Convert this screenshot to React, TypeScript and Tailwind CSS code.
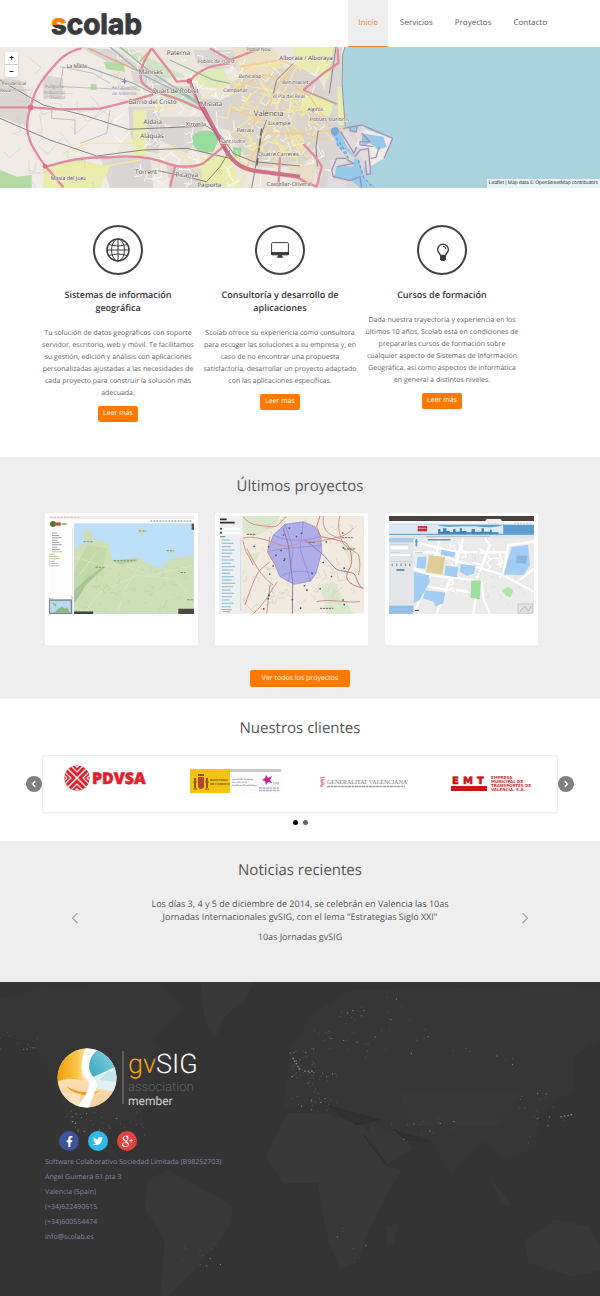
import React from "react";
import { FaFacebookF, FaTwitter } from "react-icons/fa";
import { TiSocialGooglePlus } from "react-icons/ti";

/* Deterministic noise so that generated streets stay the same on every render. */
function noise(seed: number) {
  let s = seed;
  return () => {
    s = (s * 16807) % 2147483647;
    return s / 2147483647;
  };
}

type Box = [number, number, number, number];

function scatter(seed: number, count: number, [x, y, w, h]: Box) {
  const next = noise(seed * 7919);
  return Array.from({ length: count }, () => [x + next() * w, y + next() * h]);
}

function streets(seed: number, count: number, box: Box, size: number) {
  const next = noise(seed + 77);
  return scatter(seed, count, box)
    .map(([x, y]) => {
      const a = next() * 3.14;
      const l = size * (0.4 + next());
      return `M${x.toFixed(0)} ${y.toFixed(0)}l${(Math.cos(a) * l).toFixed(0)} ${(Math.sin(a) * l).toFixed(0)}l${(-Math.sin(a) * l * 0.6).toFixed(0)} ${(Math.cos(a) * l * 0.6).toFixed(0)}`;
    })
    .join("");
}

const MOTORWAYS = [
  "M245 145C190 155 165 195 135 230C105 270 100 290 92 322C75 370 80 400 95 435C110 460 120 480 138 500L190 562",
  "M0 322L92 322L180 328L300 326L385 305L460 283",
  "M455 145C430 185 415 215 425 245C440 270 480 280 520 293C560 305 580 320 610 330",
  "M455 145L510 215L530 245L570 242",
  "M690 190C640 195 600 205 570 242C575 285 600 310 615 345C640 385 655 420 680 455C705 490 730 500 750 508L900 530",
  "M140 500C200 480 260 470 330 472C400 465 450 470 500 490C540 505 590 500 610 490L670 440",
  "M840 470L835 560M630 145L690 180L780 145M510 562L525 500",
  "M910 270L970 220L1015 190L1013 145M910 432L950 475L965 500L950 560L920 548L890 530",
];

const PLACES: [number, number, number, string][] = [
  [535, 164, 19, "Paterna"],
  [230, 204, 16, "La Malla"],
  [452, 222, 19, "Manises"],
  [526, 279, 19, "Quart de Poblet"],
  [458, 312, 19, "Barrio del Cristo"],
  [634, 318, 19, "Mislata"],
  [458, 373, 19, "Aldaia"],
  [456, 414, 19, "Alaquàs"],
  [588, 378, 17, "Xirivella"],
  [806, 348, 23, "València"],
  [838, 375, 16, "Eixample"],
  [736, 397, 16, "Patraix"],
  [698, 430, 15, "Sant Isidre"],
  [835, 469, 16, "Quatre Carreres"],
  [438, 523, 19, "Torrent"],
  [560, 531, 19, "Picanya"],
  [628, 562, 18, "Paiporta"],
  [205, 539, 16, "Masia del Juez"],
  [868, 559, 17, "Castellar-Oliveral"],
  [648, 189, 15, "Pobles de l'Oest"],
  [775, 153, 15, "Poble Nou"],
  [750, 233, 15, "Benicalap"],
  [706, 275, 15, "Campanar"],
  [918, 180, 18, "Alboraia / Alboraya"],
  [886, 252, 15, "Benimaclet"],
  [866, 294, 15, "el Pla del Real"],
  [946, 332, 15, "Algirós"],
  [988, 362, 15, "Poblats Marítims"],
  [42, 255, 14, "Residencial"],
  [16, 275, 14, "Reva"],
];

function CityMap() {
  return (
    <svg className="block h-[141px] w-full" viewBox="0 141 1800 423" preserveAspectRatio="xMidYMid slice" role="img" aria-label="Mapa de València">
      <rect x="0" y="141" width="1800" height="423" fill="#f0ebe6" />
      <path d="M360 141H1040V564H520L350 470L400 320L330 230Z" fill="#ece6dc" />
      <g fill="#d9d6d3">
        <path d="M0 235L60 240L90 300L85 380L0 350ZM130 225L190 235L185 300L130 290ZM240 141L350 150L420 200L330 190ZM390 200L470 195L500 240L450 265L400 245ZM450 255L590 260L610 300L520 310ZM385 320L480 320L475 460L410 450L390 400ZM480 350L620 350L600 410L560 460L480 420ZM300 470L450 470L460 564H330ZM500 495L610 505L600 564H510ZM580 150L700 150L720 200L640 210L590 190ZM600 300L700 290L720 400L650 380Z" />
        <path d="M690 250L760 210L900 200L960 240L1000 330L1000 420L900 500L760 500L690 410Z" fill="#dcd5ce" />
        <path d="M990 141H1025L1022 250L1035 380L1090 378L1065 440L1110 450L1120 564H960L940 470L960 390Z" />
      </g>
      <g fill="#e8edae">
        <path d="M130 500L240 480L330 500L300 564H130ZM600 470L690 470L720 564H610ZM880 141H1000L985 240L950 220L900 200ZM400 330H440V470H400ZM910 280L1000 310L990 350L900 330Z" />
        <path d="M700 141H820L850 200L780 235L710 210ZM860 490L950 490L940 560L880 540Z" fill="#eadfc4" />
        <path d="M1012 260H1022L1035 375H1015Z" />
      </g>
      <g fill="#b4dba4">
        <path d="M310 185L370 190L375 215L320 208ZM272 252H290V270H272ZM0 510L50 530L95 525L95 564H0Z" />
        <path d="M575 415C590 385 640 385 660 410L640 455C600 465 580 450 575 415Z" fill="#98db9d" />
        <path d="M700 440L725 445L720 480L698 470Z" fill="#98db9d" />
        <path d="M570 215L670 205L690 245L650 265L600 255Z" fill="#dfe9b9" />
        <path d="M470 270L560 285L600 325L570 320L500 295ZM350 141L400 150L560 230L500 235Z" fill="#cfe3c6" />
      </g>
      <path d="M1035 141L1028 165L1026 250L1032 330L1040 385L1085 375L1102 390L1178 415L1152 475L1110 500L1105 525L1090 495L1100 564H1800V141Z" fill="#aad3df" />
      <g fill="#97c9e8">
        <path d="M990 388L1012 380L1035 405L1050 450L1065 470L1060 500L1010 495L1000 530L1060 545L1080 564H1105L1075 480L1035 450L1015 440Z" />
        <path d="M1050 380H1072L1068 396L1050 390ZM1085 400L1150 410L1160 440L1135 450L1110 430L1085 440Z" />
      </g>
      <path d="M1020 390L1045 392L1070 435L1062 462L1040 440ZM1070 450L1105 445L1110 500L1105 525L1095 490L1080 470ZM1066 400L1095 382L1080 430ZM990 480L1040 480L1030 495L1010 500L1000 535L1040 545L1035 564H980Z" fill="#e2dcde" />
      <g fill="none" stroke="#ffffff" strokeWidth="3" opacity=".8">
        <path d={streets(5, 110, [360, 150, 620, 400], 34)} />
        <path d={streets(9, 26, [0, 150, 380, 400], 60)} stroke="#cfcac6" strokeWidth="2" />
      </g>
      <g fill="none" stroke="#f5e79c" strokeWidth="4">
        <path d={streets(21, 60, [690, 180, 290, 310], 36)} />
        <path d="M200 460L260 430L400 430L430 330L520 320M200 460L210 490M130 520L250 510L420 480M600 300L700 240L760 200L850 190M690 400L760 350L900 330L1000 310M720 560L780 430L840 300L910 160M700 250L860 280L1000 420M760 210L820 300L900 460M500 430L560 470L620 564" />
      </g>
      <g fill="none" stroke="#f6cc8f" strokeWidth="5">
        <path d="M700 270L790 225L850 235L930 290L990 380M680 440L740 390L800 330L830 260L880 200M740 500L800 400L900 400L980 420M690 330L770 350L850 340M720 200L840 180L890 200M960 395L1000 390L1035 385" />
        <path d="M265 145L330 175L420 215M455 145L420 185" stroke="#ddb08c" />
        <path d="M910 270L1010 312" stroke="#c79c83" />
      </g>
      <g fill="none" stroke="#9fb7b0" strokeWidth="4">
        <path d="M330 141L430 225L560 290L620 330M360 141L450 215L600 310M230 190L400 250L460 280M510 180L640 240L690 250" />
      </g>
      <g fill="none" stroke="#77736f" strokeWidth="2.5">
        <path d="M0 240L60 275L130 315L250 345L385 388L620 378L665 410L700 460L760 485L900 498M0 355L150 420L290 468L430 450L560 445L690 475M1008 141L998 210L988 280M755 564L785 400L800 360M475 512L620 545L660 500L690 450M955 390L948 440L952 500M820 280L830 240L880 190" />
        <path d="M155 328V355L225 360V405M330 330L320 400L240 430M0 270H90M190 200L180 260L420 270M180 200L280 220L330 250" stroke="#bdb6b2" />
      </g>
      <path d="M785 385L770 500" stroke="#6f6b69" strokeWidth="5" strokeDasharray="22 8" />
      <g fill="none" stroke="#e38b9b" strokeWidth="7" strokeLinejoin="round">
        {MOTORWAYS.map((d) => (
          <path key={d} d={d} />
        ))}
      </g>
      <path d="M600 305C620 345 650 400 680 455C705 495 730 505 760 512L900 530" fill="none" stroke="#cf7188" strokeWidth="12" />
      <path d="M570 235L600 320M600 320L680 455" stroke="#a8607c" strokeWidth="3" />
      <g fill="#dc6f86">
        <rect x="84" y="314" width="16" height="16" rx="6" />
        <circle cx="568" cy="243" r="8" />
        <circle cx="670" cy="430" r="9" />
        <circle cx="135" cy="499" r="7" />
      </g>
      <g fill="none" stroke="#a094b8" strokeWidth="4">
        <path d="M1030 385L1085 375L1178 415L1152 475M1050 380V392L1068 396L1072 380M1085 400L1110 425H1080V435L1120 440M1138 440L1128 472L1112 475M1022 395L1062 460L1070 440M1065 470L1080 450L1105 445L1112 522L1100 524L1096 482M1040 475H1010L995 510L1000 530L1050 542L1080 530L1085 564M1040 478L1060 490L1010 500" />
        <path d="M1075 480L1090 530L1120 564M1010 430L1050 480M1000 400L1040 460" stroke="#6f9fe6" strokeDasharray="10 6" />
      </g>
      <circle cx="1005" cy="394" r="12" fill="#7fa6dd" />
      <path d="M1035 141L1028 165L1026 250L1032 330L1036 380" fill="none" stroke="#8f96a0" strokeWidth="3" />
      <g fill="#8f8bc0" fontFamily="Open Sans, Noto Sans, sans-serif" fontSize="14" textAnchor="middle">
        <path d="M373 232L376 242L384 246L376 247L374 254L371 247L363 246L371 242Z" />
        <text x="373" y="268">Aeropuerto</text>
        <text x="373" y="284">de Valencia</text>
        <text x="163" y="264" fill="#9c94a8">Polígono</text>
        <text x="163" y="281" fill="#9c94a8">Industrial</text>
        <text x="163" y="298" fill="#9c94a8">el Oliveral</text>
      </g>
      <g fill="#4b4948" stroke="#f4efe9" strokeWidth="3" paintOrder="stroke" strokeLinejoin="round" fontFamily="Open Sans, Noto Sans, sans-serif" textAnchor="middle">
        {PLACES.map(([x, y, size, name]) => (
          <text key={name} x={x} y={y} fontSize={size}>
            {name}
          </text>
        ))}
      </g>
    </svg>
  );
}

function CoastThumb() {
  return (
    <svg className="block h-auto w-full" viewBox="27 153 433 293" role="img" aria-label="Visor de costa">
      <rect x="27" y="153" width="433" height="293" fill="#fdfdfd" />
      <rect x="27" y="153" width="433" height="9" fill="#f0eeee" />
      <path d="M32 157H120" stroke="#d7b1ac" strokeWidth="3" strokeDasharray="6 4" />
      <path d="M330 168H455" stroke="#8fb39a" strokeWidth="4" strokeDasharray="5 4" />
      <circle cx="39" cy="177" r="9" fill="#5f7338" />
      <path d="M48 177H62" stroke="#c8502e" strokeWidth="10" />
      <path d="M64 177H80" stroke="#9fbd77" strokeWidth="6" />
      {Array.from({ length: 15 }, (_, i) => (
        <rect key={i} x={i < 9 ? 36 : 27} y={203 + i * 7} width={14 + ((i * 7) % 20)} height="2" fill={i < 8 ? "#777777" : "#a3a96c"} />
      ))}
      <rect x="97" y="190" width="2" height="256" fill="#d8d8d8" />
      <rect x="102" y="175" width="358" height="271" fill="#bddff8" />
      <path d="M102 250L120 240L142 232L128 220L133 198L145 192L160 215L150 230L185 225L208 240L214 280L250 287L290 277L330 300L365 310L390 280L420 278L460 270V446H102Z" fill="#cddfb6" />
      <path d="M102 320L140 240L200 250L190 300L102 400Z" fill="#c2d9a9" />
      <path d="M102 375L140 340L180 310L195 305L140 355L102 415Z" fill="#a5c693" />
      <path d="M214 285L285 280L292 286L240 298Z" fill="#b3cd9b" />
      <path d="M292 196L305 190L318 200L304 208ZM376 256L392 250L400 262L385 265Z" fill="#c7dcb6" />
      <path d="M105 275L180 300L250 300L330 330L460 300M130 446L180 380L290 330L400 340L460 400M230 446L260 360L300 300M110 340L170 260" fill="none" stroke="#e0e8c2" strokeWidth="2" />
      <path d={streets(14, 60, [105, 300, 340, 130], 12)} fill="none" stroke="#bfd2a4" strokeWidth="2" />
      <path d="M166 306H192M220 287H285M130 230H160M420 322H434M440 403H460M295 198H318M378 257H400" stroke="#7a9673" strokeWidth="3" strokeDasharray="7 3" />
      <rect x="453" y="176" width="7" height="18" fill="#555555" />
      <rect x="102" y="438" width="57" height="8" fill="#444444" />
      <rect x="413" y="430" width="47" height="16" fill="#4a4a40" />
      <path d="M27 400H37" stroke="#d2b96c" strokeWidth="3" />
      <rect x="28" y="404" width="66" height="40" fill="#b9d9f2" stroke="#76828c" strokeWidth="4" />
      <path d="M34 410L50 418L46 424ZM42 442L55 430L66 424L76 430L82 425L88 442Z" fill="#8abb76" />
    </svg>
  );
}

function ProvinceThumb() {
  return (
    <svg className="block h-auto w-full" viewBox="537 153 435 293" role="img" aria-label="Visor provincial">
      <rect x="537" y="153" width="435" height="293" fill="#f1eadf" />
      <path d="M608 153H720L700 190L640 215L608 200ZM620 270L660 260L650 290ZM840 360L880 350L940 446H860ZM900 230L950 250L930 290Z" fill="#dce6cb" />
      <path d={streets(31, 46, [612, 160, 340, 260], 20)} fill="none" stroke="#dccfbd" strokeWidth="2" />
      <path d={streets(38, 24, [612, 300, 340, 120], 14)} fill="none" stroke="#b9dada" strokeWidth="2" />
      <path d="M683 260L700 210L735 178L790 170L825 185L842 215L845 262L828 325L812 348L762 358L720 335L705 300Z" fill="#a9a8ea" stroke="#7a7ad8" strokeWidth="2" opacity=".9" />
      <path d="M683 260C720 250 760 250 845 240M700 210C740 230 790 230 842 215M735 178L760 250L745 350M790 170L780 250L812 348M720 335C760 310 800 320 828 325" fill="none" stroke="#8d84cf" strokeWidth="2" />
      <g fill="none" stroke="#cf938b" strokeWidth="3" strokeLinejoin="round">
        <path d="M610 155C630 185 660 180 690 185S720 165 740 155M608 220C640 210 680 225 720 240S780 225 800 230S880 220 900 215S930 200 940 190M620 250C640 290 650 305 656 315S690 355 700 360M615 420C625 390 640 350 650 330S680 300 690 290M608 225L616 255L640 300M690 360L680 446M712 350C690 380 680 410 640 446M850 153C845 200 870 210 900 220M830 410C870 400 920 415 960 410" />
        <path d="M900 153C890 180 900 220 910 235S950 260 955 270S962 310 955 330M690 215L683 262L700 290" />
      </g>
      <g fill="none" stroke="#8580a0" strokeWidth="3">
        <path d="M730 190L745 240L752 300L758 350L757 446M795 225L845 265C870 290 880 310 895 315S940 320 945 330S955 365 970 370" />
        <path d="M840 153L830 185L842 215C870 220 890 225 910 230S935 270 935 290S920 315 920 335S950 365 970 370" stroke="#d07c70" />
      </g>
      <g fill="#4d4c73">
        {scatter(12, 30, [615, 160, 300, 270]).map(([x, y]) => (
          <rect key={x} x={x} y={y} width="5" height="5" rx="2" />
        ))}
      </g>
      <path d="M620 208H648M808 232H826M905 218H938M912 252H944M840 430H880" stroke="#686868" strokeWidth="3" strokeDasharray="7 2" />
      <rect x="537" y="153" width="70" height="293" fill="#eef0f1" />
      <path d="M540 163H560M540 173H584" stroke="#2f2f2f" strokeWidth="5" />
      <circle cx="543" cy="191" r="3" fill="#333333" />
      <circle cx="543" cy="203" r="3" fill="#333333" />
      <path d="M552 191H600M552 203H600" stroke="#ffffff" strokeWidth="6" />
      <path d="M540 215H556" stroke="#777777" strokeWidth="3" />
      {Array.from({ length: 21 }, (_, i) => (
        <rect key={i} x={545} y={223 + i * 10} width={24 + ((i * 11) % 18)} height="4" fill="#9cc9da" />
      ))}
      <rect x="600" y="218" width="4" height="220" fill="#d3dfe4" />
      <path d="M545 434H575M550 440H570" stroke="#8b8b8b" strokeWidth="2" />
    </svg>
  );
}

function StreetThumb() {
  return (
    <svg className="block h-auto w-full" viewBox="298 153 434 293" role="img" aria-label="Visor callejero">
      <rect x="298" y="153" width="434" height="293" fill="#ebebeb" />
      <rect x="298" y="153" width="434" height="16" fill="#4a423f" />
      <path d="M586 169L590 162H632L636 169Z" fill="#ececec" />
      <rect x="298" y="168" width="434" height="11" fill="#f4f4f4" />
      <path d="M595 175H620M672 175H725" stroke="#c9c9c9" strokeWidth="3" strokeDasharray="6 3" />
      <rect x="298" y="179" width="434" height="31" fill="#5b9fd2" />
      <path d="M298 179H440C470 190 500 182 560 184C600 190 630 184 640 180V210H298Z" fill="#dbeaf5" />
      <path d="M445 210V192H452V200H460V190H470V198H480V202H490V192H497V200H510V190H516V198H530V202H545V192H555V200H575V190H582V200H600V194H606V202H626V210Z" fill="#3f80b4" />
      <path d="M298 208H732" stroke="#72a9d2" strokeWidth="4" />
      <rect x="384" y="183" width="28" height="16" fill="#c9303e" />
      <path d="M386 190H410" stroke="#f0c4c8" strokeWidth="2" />
      <rect x="298" y="212" width="434" height="8" fill="#e0e4e6" />
      <path d="M410 214H600" stroke="#9aaab5" strokeWidth="2" />
      <g stroke="#ffffff" strokeWidth="7" fill="none">
        <path d="M372 262L430 262L510 290L640 330L732 380M372 310L420 330L560 345L600 240L585 220M450 220L440 262L420 330L372 446M520 220L500 290L470 370L440 446M640 330L655 240L732 230M480 370L560 385L550 446M395 360L500 380M690 345L732 310M372 230L500 262L650 262M600 446L580 400L575 345" />
        <path d={streets(44, 20, [480, 225, 160, 110], 24)} strokeWidth="4" />
      </g>
      <path d={streets(41, 30, [480, 235, 220, 180], 15)} fill="none" stroke="#dcdcdc" strokeWidth="2" />
      <g fill="#a3cdf2">
        <path d="M384 276L410 274L407 311L380 308ZM455 253L497 262L493 277L453 270ZM467 302L505 306L501 337L464 330ZM512 297L558 302L552 325L532 332L510 320ZM372 320L418 330L420 350L390 405L372 415ZM406 375L467 382L460 415L436 423L432 410L400 400ZM665 246L714 240L720 300L700 330L641 328Z" />
      </g>
      <path d="M680 272L712 272L708 296L678 294Z" fill="#87b8e2" />
      <path d="M418 270L466 276L458 328L410 322Z" fill="#e0cd95" />
      <path d="M544 346L573 346L570 402L542 398Z" fill="#9fdf9c" />
      <path d="M636 376L655 365L670 376L662 396L648 392Z" fill="#aae7a2" />
      <rect x="298" y="219" width="73" height="202" fill="#e3e5e9" />
      <rect x="298" y="219" width="73" height="13" fill="#a8ccec" />
      <path d="M302 248H355M302 272H362" stroke="#ffffff" strokeWidth="9" />
      <path d="M302 238H355M302 262H330M302 275H368M302 289H368" stroke="#c5c7ca" strokeWidth="2" />
      <path d="M306 299H366" stroke="#8d949a" strokeWidth="8" strokeDasharray="4 9" />
      <rect x="320" y="312" width="24" height="5" fill="#5c84a8" />
      <rect x="298" y="421" width="73" height="25" fill="#93c0e8" />
      <path d="M376 230H384M380 222V244M414 224H482" stroke="#4fa6b4" strokeWidth="5" />
      <path d="M376 263H400" stroke="#68c768" strokeWidth="2" />
      <path d="M684 416H728V444H684Z" fill="#e1e1e1" stroke="#bcbcbc" strokeWidth="2" />
      <path d="M690 438L705 424L716 438L724 422" stroke="#a9a9a9" strokeWidth="2" fill="none" />
      <path d="M376 436H388" stroke="#555555" strokeWidth="3" />
    </svg>
  );
}

function ScolabLogo() {
  return (
    <svg className="block h-[40px] w-[104px]" viewBox="0 0 104 40" role="img" aria-label="scolab">
      <defs>
        <linearGradient id="mark" gradientUnits="userSpaceOnUse" x1="0" y1="12" x2="0" y2="31">
          <stop offset=".5" stopColor="#f97d0b" />
          <stop offset=".5" stopColor="#3a3a3c" />
        </linearGradient>
      </defs>
      <text x="4" y="30" fill="#3a3a3c" stroke="#3a3a3c" fontFamily="Inter, sans-serif" fontSize="28" fontWeight="700" strokeWidth="1" strokeLinejoin="round">
        <tspan fill="url(#mark)" stroke="url(#mark)">s</tspan>colab
      </text>
    </svg>
  );
}

function GlobeIcon() {
  return (
    <svg className="size-6" viewBox="0 0 24 24" fill="none" stroke="#3d3d3d" strokeWidth="1">
      <circle cx="12" cy="12" r="11" strokeWidth="1.6" />
      <ellipse cx="12" cy="12" rx="6.5" ry="11" />
      <path d="M12 1V23M1 12H23M3 6.5C8 8.4 16 8.4 21 6.5M3 17.5C8 15.6 16 15.6 21 17.5" />
    </svg>
  );
}

function ScreenIcon() {
  return (
    <svg className="size-6" viewBox="0 0 24 24">
      <rect x="3.6" y="4.6" width="16.8" height="12" rx="1" fill="#ffffff" stroke="#3d3d3d" strokeWidth="1" />
      <path d="M3 14H21V16.4Q21 17.2 20 17.2H4Q3 17.2 3 16.4ZM10 17H14V18.6H15V19.8H9V18.6H10Z" fill="#3d3d3d" />
    </svg>
  );
}

function BulbIcon() {
  return (
    <svg className="size-6" viewBox="0 0 24 24" fill="none" stroke="#3d3d3d">
      <g transform="translate(1 2)">
        <path d="M9.6 16C9.6 13.6 6.6 12.6 6.6 9.4A5.4 5.2 0 0 1 17.4 9.4C17.4 12.6 14.4 13.6 14.4 16Z" strokeWidth="1.4" />
        <path d="M12 6.4C13.6 6.4 14.8 7.6 14.9 9" strokeWidth="1" />
        <path d="M9 14.8H15V19.2L13.4 21H10.6L9 19.2Z" fill="#3d3d3d" stroke="none" />
      </g>
    </svg>
  );
}

function PdvsaLogo() {
  return (
    <svg className="block h-[28px] w-[86px]" viewBox="0 0 86 28" role="img" aria-label="PDVSA">
      <defs>
        <clipPath id="disc">
          <circle cx="13" cy="14" r="12.6" />
        </clipPath>
      </defs>
      <circle cx="13" cy="14" r="12.6" fill="#e2202c" />
      <g clipPath="url(#disc)" fill="none" stroke="#ffffff" strokeWidth="1.1">
        <g transform="translate(0 1)">
          <path d="M0 0L26 26M26 0L0 26" strokeWidth="1.4" />
          <path d="M4 -2L13 7L22 -2M7 -4L13 2.5L19 -4M4 28L13 19L22 28M7 30L13 23.5L19 30M-2 4L7 13L-2 22M-2 8L3 13L-2 18M28 4L19 13L28 22M28 8L23 13L28 18" />
        </g>
      </g>
      <text x="28" y="20" fill="#e2202c" stroke="#e2202c" strokeWidth=".5" fontFamily="Noto Sans, sans-serif" fontWeight="900" fontSize="16">PDVSA</text>
    </svg>
  );
}

function MinisterioLogo() {
  return (
    <svg className="block h-[26px] w-[92px]" viewBox="0 0 92 26" role="img" aria-label="Ministerio de Fomento">
      <rect x="0" y="0" width="91" height="24" fill="#fbfbfc" />
      <rect x="40" y="0" width="51" height="3" fill="#c9c9cd" />
      <rect x="0" y="0" width="40" height="24" fill="#f2c311" />
      <path d="M8 8H14V18Q11 22 8 18Z" fill="#b2452a" />
      <path d="M4 9H6V19H4ZM16 9H18V19H16ZM8 5H14V7H8Z" fill="#8b5a1e" />
      <path d="M3 13H7M15 13H19M3 20H7M15 20H19" stroke="#8b5a1e" />
      <g fontFamily="Liberation Sans, sans-serif" fontSize="3" fontWeight="700">
        <text x="20" y="12" fill="#6d5a12">MINISTERIO</text>
        <text x="20" y="16" fill="#6d5a12">DE FOMENTO</text>
        <g fill="#70707c" fontSize="2">
          <text x="42" y="11">DIRECCIÓN GENERAL</text>
          <text x="42" y="14">DEL INSTITUTO</text>
          <text x="42" y="17">GEOGRÁFICO NACIONAL</text>
        </g>
        <text x="83" y="15" fill="#b085ad">cnig</text>
      </g>
      <path d="M76 6L78 9L82 7L80 11L82 14L78 13L76 16L75 12L72 11L75 9Z" fill="#c6249b" />
      <path d="M69 19H89M69 21.5H90" stroke="#b9b1cf" strokeWidth="1.4" strokeDasharray="3 .5" />
    </svg>
  );
}

function GeneralitatLogo() {
  return (
    <svg className="block h-[14px] w-[94px]" viewBox="0 0 94 14" role="img" aria-label="Generalitat Valenciana">
      <path d="M3 2L8 1M3 5L8 3.5M4 7H8M3 10L7 8.5M5 1V11" stroke="#d97a92" strokeWidth="1.2" />
      <text x="10" y="8" fill="#77777c" fontFamily="Liberation Serif, serif" fontSize="6">GENERALITAT VALENCIANA</text>
      <path d="M10 10.5H88" stroke="#a5a5aa" strokeWidth="1.4" strokeDasharray="3 .5" />
    </svg>
  );
}

function EmtLogo() {
  return (
    <svg className="block h-[20px] w-[83px]" viewBox="0 -2 83 20" role="img" aria-label="EMT">
      <text y="8" fill="#cd1414" stroke="#cd1414" strokeWidth=".6" fontFamily="DejaVu Sans, sans-serif" fontWeight="700" fontSize="10">
        <tspan x="1">E</tspan>
        <tspan x="12">M</tspan>
        <tspan x="26">T</tspan>
      </text>
      <rect x="0" y="10" width="36" height="5" fill="#cd1414" />
      <g fill="#cd3434" fontFamily="DejaVu Sans, sans-serif" fontWeight="700" fontSize="4">
        <text x="40" y="3">EMPRESA</text>
        <text x="40" y="7">MUNICIPAL DE</text>
        <text x="40" y="11">TRANSPORTES DE</text>
        <text x="40" y="15">VALENCIA, S.A.</text>
      </g>
    </svg>
  );
}

function GvsigLogo() {
  return (
    <svg className="block h-[62px] w-[150px]" viewBox="0 0 150 62" role="img" aria-label="gvSIG association member">
      <defs>
        <clipPath id="ball">
          <circle cx="30" cy="30" r="29.5" />
        </clipPath>
        <linearGradient id="sun" x1="0" y1="0" x2="1" y2="0">
          <stop offset="0" stopColor="#ed9e0c" />
          <stop offset=".6" stopColor="#f8c341" />
          <stop offset="1" stopColor="#fceab9" />
        </linearGradient>
        <linearGradient id="sea" x1="1" y1="0" x2="0" y2="1">
          <stop offset="0" stopColor="#8fd6e0" />
          <stop offset="1" stopColor="#35a6c0" />
        </linearGradient>
        <linearGradient id="sand" x1="0" y1="0" x2="0" y2="1">
          <stop offset="0" stopColor="#fdf0cf" />
          <stop offset="1" stopColor="#f9cd9a" />
        </linearGradient>
      </defs>
      <g clipPath="url(#ball)">
        <rect x="0" y="0" width="60" height="60" fill="url(#sand)" />
        <path d="M0 0H32C24 10 22 22 26 33C18 30 8 30 0 34Z" fill="url(#sun)" />
        <path d="M40 0H60V20L34 30C28 20 33 8 40 0Z" fill="url(#sea)" />
        <path d="M34 30L60 18V44L38 40Z" fill="#e2f2f4" />
        <path d="M42 32L50 24L60 22V34Z" fill="#c2e5ec" />
        <path d="M9 38C17 43 30 46 43 43C33 50 18 48 9 38Z" fill="#eea327" />
        <path d="M24 46L4 44L14 56L22 60Z" fill="#f8e2be" />
        <path d="M29 0C22 14 24 26 31 33C34 38 30 46 20 60H32C35 50 38 44 40 38C41 32 32 27 32 19C32 10 37 3 44 0Z" fill="#ffffff" />
      </g>
      <path d="M66 3V56" stroke="#858585" strokeWidth="1" />
      <g fontFamily="Roboto, sans-serif">
        <text x="71" y="25" fontSize="27" fontWeight="300" fill="#ffffff">
          <tspan fill="#f6a50c">gv</tspan>SIG
        </text>
        <text x="71" y="43" fontSize="13" fontWeight="300" fill="#626262">association</text>
        <text x="71" y="57" fontSize="12" fontWeight="400" fill="#d2d2d2">member</text>
      </g>
    </svg>
  );
}

const LIGHTS: [number, number, Box][] = [
  [101, 34, [755, 205, 70, 90]],
  [102, 30, [790, 270, 90, 100]],
  [103, 26, [810, 90, 140, 120]],
  [104, 20, [940, 50, 180, 190]],
  [105, 20, [1350, 340, 150, 150]],
  [106, 18, [1020, 400, 180, 80]],
  [107, 40, [170, 390, 210, 80]],
  [108, 12, [0, 150, 100, 60]],
  [109, 12, [450, 780, 130, 90]],
  [110, 14, [750, 340, 120, 60]],
  [111, 8, [1180, 200, 180, 60]],
  [112, 6, [880, 740, 80, 100]],
];

function NightWorld() {
  return (
    <svg className="absolute inset-0 size-full" viewBox="0 8 1568 940" preserveAspectRatio="none" aria-hidden="true">
      <g fill="#383838">
        <path d="M0 60L120 20L420 8L480 90L400 180L440 230L400 300L370 400L380 440L330 420L290 440L290 500L330 560L250 500L180 430L150 330L90 190L0 170Z" fill="#363636" />
        <path d="M525 8H665L640 60L590 110L565 170L545 150L530 90Z" />
        <path d="M385 600L440 570L520 620L610 680L600 740L560 800L500 880L440 948H420L430 780L380 690Z" />
        <path d="M750 400L850 400L940 435L960 450L1000 555L1050 570L1010 650L970 740L930 850L890 870L860 790L840 690L830 610L740 610L695 530Z" />
        <path d="M960 400L1040 440L1080 510L1010 555L970 480Z" />
        <path d="M740 390L760 200L830 90L920 30L1568 20V180L1500 230L1500 330L1410 400L1400 500L1320 540L1260 480L1180 590L1130 490L1040 470L960 430L860 370Z" fill="#363636" />
        <path d="M1370 780L1450 720L1540 740L1568 800V870L1500 890L1380 850Z" />
        <path d="M1010 740L1040 730L1030 790L1010 800ZM1280 590L1340 680L1310 670ZM1040 340L1360 340L1300 440L1080 440Z" />
      </g>
      <path d="M860 380L940 405L990 420L930 435ZM950 465L1010 555M1030 450L1060 480L1130 485" fill="#313131" stroke="#303030" strokeWidth="4" />
      {LIGHTS.map(([seed, count, box]) =>
        scatter(seed, count, box).map(([x, y], i) => (
          <rect key={`${seed}-${i}`} x={x} y={y} width="2.6" height="3" fill={i % 4 === 0 ? "#8c8c8c" : "#565656"} />
        )),
      )}
      <path d="M765 235L785 272M795 275H822M1465 412L1495 405M188 425L200 432" stroke="#8c8c8c" strokeWidth="4" strokeDasharray="4 5" />
    </svg>
  );
}

const NAV = ["Inicio", "Servicios", "Proyectos", "Contacto"];

const SERVICES = [
  {
    title: "Sistemas de información geográfica",
    text: "Tu solución de datos geográficos con soporte servidor, escritorio, web y móvil. Te facilitamos su gestión, edición y análisis con aplicaciones personalizadas ajustadas a las necesidades de cada proyecto para construir la solución más adecuada.",
    icon: <GlobeIcon />,
  },
  {
    title: "Consultoría y desarrollo de aplicaciones",
    text: "Scolab ofrece su experiencia como consultora para escoger las soluciones a su empresa y, en caso de no encontrar una propuesta satisfactoria, desarrollar un proyecto adaptado con las aplicaciones específicas.",
    icon: <ScreenIcon />,
  },
  {
    title: "Cursos de formación",
    text: "Dada nuestra trayectoria y experiencia en los últimos 10 años, Scolab está en condiciones de prepararles cursos de formación sobre cualquier aspecto de Sistemas de Información Geográfica, así como aspectos de informática en general a distintos niveles.",
    icon: <BulbIcon />,
  },
];

const CONTACT = [
  "Software Colaborativo Sociedad Limitada (B98252703)",
  "Ángel Guimerá 61 pta 3",
  "Valencia (Spain)",
  "(+34)622490615",
  "(+34)600554474",
];

function Heading({ children }: { children: React.ReactNode }) {
  return <h2 className="text-center text-[15px] leading-6 text-[#555]">{children}</h2>;
}

function Arrow({ left }: { left?: boolean }) {
  return (
    <svg className="h-3 w-2" viewBox="0 0 8 12" fill="none" stroke="#777777" strokeWidth="1">
      <path d={left ? "M6.5 1L1.5 6L6.5 11" : "M1.5 1L6.5 6L1.5 11"} />
    </svg>
  );
}

function RoundArrow({ left }: { left?: boolean }) {
  return (
    <button type="button" aria-label={left ? "Anterior" : "Siguiente"} className="flex size-4 shrink-0 items-center justify-center rounded-full bg-[#808080]">
      <svg className="size-2" viewBox="0 0 8 8" fill="none" stroke="#ffffff" strokeWidth="1.6">
        <path d={left ? "M5.2 1.4L2.6 4L5.2 6.6" : "M2.8 1.4L5.4 4L2.8 6.6"} />
      </svg>
    </button>
  );
}

export default function App() {
  return (
    <div className="bg-white font-['Open_Sans','Noto_Sans',sans-serif] text-[#555] [text-rendering:geometricPrecision]">
      <header className="flex h-[47px] justify-between pr-[43px] pl-[47px]">
        <a href="#inicio" className="self-center">
          <ScolabLogo />
        </a>
        <nav className="flex gap-[2px] text-[8px]">
          {NAV.map((item, i) => (
            <a
              key={item}
              href={`#${item.toLowerCase()}`}
              className={i === 0 ? "flex items-center border-b border-[#e8852a] bg-[#eee] px-[10px] text-[#f58220]" : "flex items-center border-b border-transparent px-[10px]"}
            >
              {item}
            </a>
          ))}
        </nav>
      </header>

      <section className="relative">
        <CityMap />
        <div className="absolute top-[5px] left-[5px] flex w-[13px] flex-col overflow-hidden rounded-xs bg-white text-[8px] leading-3 font-bold text-black shadow-sm">
          <button type="button" aria-label="Acercar" className="h-[13px] border-b border-[#ccc]">+</button>
          <button type="button" aria-label="Alejar" className="h-3">−</button>
        </div>
        <p className="absolute right-0 bottom-0 bg-white/70 px-[2px] font-['Liberation_Sans',sans-serif] text-[5px] leading-[9px] text-[#333]">
          <a href="#leaflet">Leaflet</a> | Map data © <a href="#osm">OpenStreetMap</a> contributors
        </p>
      </section>

      <section className="grid grid-cols-3 pt-[37px] pr-[77px] pb-[35px] pl-[37px] text-center">
        {SERVICES.map((s) => (
          <article key={s.title} className="flex flex-col items-center px-1">
            <div className="flex size-[50px] items-center justify-center rounded-full border-2 border-[#444]">{s.icon}</div>
            <h3 className="mt-[13px] px-2 text-[9px] leading-[13px] font-semibold text-[#333]">{s.title}</h3>
            <p className="mt-[14px] text-[7px] leading-3 text-[#666]">{s.text}</p>
            <a href="#servicios" className="mt-[6px] rounded-xs bg-[#ff7800] px-[5px] text-[7px] leading-4 text-white">
              Leer más
            </a>
          </article>
        ))}
      </section>

      <section className="flex flex-col bg-[#eee] pt-[17px] pb-3">
        <Heading>Últimos proyectos</Heading>
        <div className="mt-[15px] grid grid-cols-3 gap-[17px] pr-[62px] pl-[45px]">
          {[<CoastThumb key="a" />, <ProvinceThumb key="b" />, <StreetThumb key="c" />].map((thumb, i) => (
            <a key={i} href="#proyectos" className="bg-white px-1 pt-[3px] pb-[31px]">
              {thumb}
            </a>
          ))}
        </div>
        <a href="#proyectos" className="mt-[25px] self-center rounded-xs bg-[#ff7800] px-3 text-[7px] leading-[17px] text-white">
          Ver todos los proyectos
        </a>
      </section>

      <section className="pt-[17px] pb-4">
        <Heading>Nuestros clientes</Heading>
        <div className="mt-[15px] flex items-center justify-between px-[26px]">
          <RoundArrow left />
          <div className="grid h-[58px] flex-1 grid-cols-4 border border-[#eee] shadow-xs">
            <div className="flex justify-center pt-2"><PdvsaLogo /></div>
            <div className="flex justify-center pt-[13px]"><MinisterioLogo /></div>
            <div className="flex justify-center pt-5"><GeneralitatLogo /></div>
            <div className="flex justify-center pt-[18px]"><EmtLogo /></div>
          </div>
          <RoundArrow />
        </div>
        <div className="mt-[7px] flex justify-center gap-[5px]">
          <button type="button" aria-label="Página 1" className="size-[5px] rounded-full bg-black" />
          <button type="button" aria-label="Página 2" className="size-[5px] rounded-full bg-[#666]" />
        </div>
      </section>

      <section className="bg-[#eee] pt-[17px] pb-[39px]">
        <Heading>Noticias recientes</Heading>
        <div className="mt-[15px] flex items-start justify-between px-[71px] text-center text-[9px] leading-[13px]">
          <button type="button" aria-label="Noticia anterior" className="pt-[15px]"><Arrow left /></button>
          <div className="max-w-[310px]">
            <p>Los días 3, 4 y 5 de diciembre de 2014, se celebrán en Valencia las 10as Jornadas Internacionales gvSIG, con el lema "Estrategias Siglo XXI"</p>
            <p className="mt-[7px]">10as Jornadas gvSIG</p>
          </div>
          <button type="button" aria-label="Noticia siguiente" className="pt-[15px]"><Arrow /></button>
        </div>
      </section>

      <footer className="relative bg-[#343434] pt-[66px] pb-[51px] pl-[45px]">
        <NightWorld />
        <div className="relative">
          <div className="pl-3"><GvsigLogo /></div>
          <div className="mt-[21px] flex gap-[9px] pl-[14px] text-white">
            <a href="#facebook" aria-label="Facebook" className="flex size-5 items-center justify-center rounded-full bg-[#3b5598]"><FaFacebookF className="size-[11px]" /></a>
            <a href="#twitter" aria-label="Twitter" className="flex size-5 items-center justify-center rounded-full bg-[#32b8ea]"><FaTwitter className="size-[10px]" /></a>
            <a href="#google" aria-label="Google Plus" className="flex size-5 items-center justify-center rounded-full bg-[#e04540]"><TiSocialGooglePlus className="size-[18px]" /></a>
          </div>
          <address className="mt-1 text-[7px] leading-[15px] text-[#8583a3] not-italic">
            {CONTACT.map((line) => (
              <p key={line}>{line}</p>
            ))}
            <a href="mailto:info@scolab.es" className="block">info@scolab.es</a>
          </address>
        </div>
      </footer>
    </div>
  );
}
